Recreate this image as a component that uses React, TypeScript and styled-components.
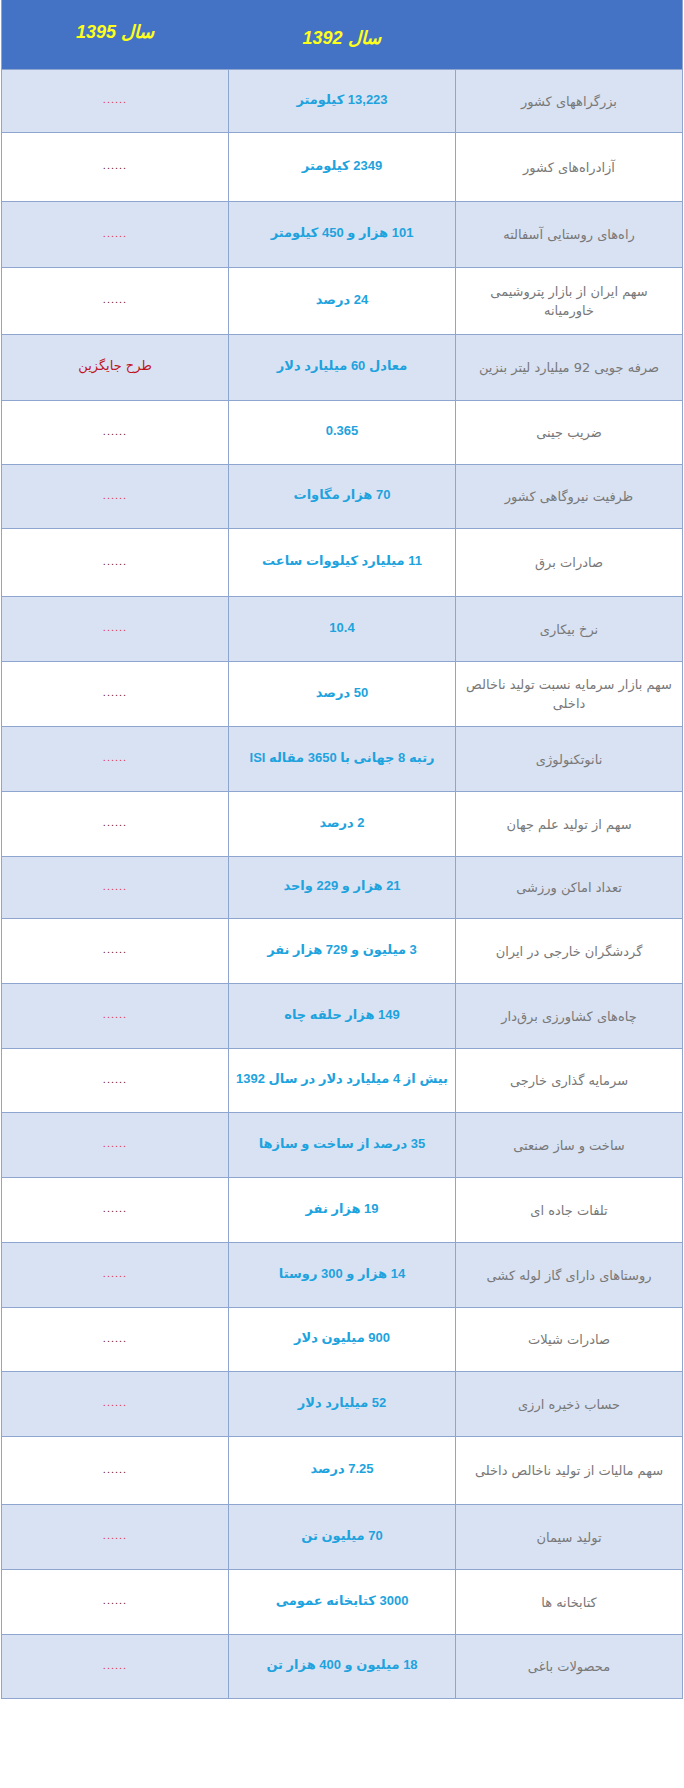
import styled, { createGlobalStyle } from "styled-components";

const GlobalStyle = createGlobalStyle`
  html, body {
    margin: 0;
    padding: 0;
    background: #ffffff;
  }
  body {
    font-family: "DejaVu Sans", sans-serif;
  }
`;

type Row = {
  label: string;
  value: string;
  h: number;
  note?: string;
};

// heights measured border to border from the source table
const rows: Row[] = [
  { label: "بزرگراههای کشور", value: "13,223 کیلومتر", h: 63 },
  { label: "آزادراه‌های کشور", value: "2349 کیلومتر", h: 69 },
  { label: "راه‌های روستایی آسفالته", value: "101 هزار و 450 کیلومتر", h: 66 },
  { label: "سهم ایران از بازار پتروشیمی\nخاورمیانه", value: "24 درصد", h: 67 },
  {
    label: "صرفه جویی 92 میلیارد لیتر بنزین",
    value: "معادل 60 میلیارد دلار",
    h: 66,
    note: "طرح جایگزین",
  },
  { label: "ضریب جینی", value: "0.365", h: 64 },
  { label: "ظرفیت نیروگاهی کشور", value: "70 هزار مگاوات", h: 64 },
  { label: "صادرات برق", value: "11 میلیارد کیلووات ساعت", h: 68 },
  { label: "نرخ بیکاری", value: "10.4", h: 65 },
  { label: "سهم بازار سرمایه نسبت تولید ناخالص\nداخلی", value: "50 درصد", h: 65 },
  { label: "نانوتکنولوژی", value: "رتبه 8 جهانی با 3650 مقاله ISI", h: 65 },
  { label: "سهم از تولید علم جهان", value: "2 درصد", h: 65 },
  { label: "تعداد اماکن ورزشی", value: "21 هزار و 229 واحد", h: 62 },
  { label: "گردشگران خارجی در ایران", value: "3 میلیون و 729 هزار نفر", h: 65 },
  { label: "چاه‌های کشاورزی برق‌دار", value: "149 هزار حلقه چاه", h: 65 },
  { label: "سرمایه گذاری خارجی", value: "بیش از 4 میلیارد دلار در سال 1392", h: 64 },
  { label: "ساخت و ساز صنعتی", value: "35 درصد از ساخت و سازها", h: 65 },
  { label: "تلفات جاده ای", value: "19 هزار نفر", h: 65 },
  { label: "روستاهای دارای گاز لوله کشی", value: "14 هزار و 300 روستا", h: 65 },
  { label: "صادرات شیلات", value: "900 میلیون دلار", h: 64 },
  { label: "حساب ذخیره ارزی", value: "52 میلیارد دلار", h: 65 },
  { label: "سهم مالیات از تولید ناخالص داخلی", value: "7.25 درصد", h: 68 },
  { label: "تولید سیمان", value: "70 میلیون تن", h: 65 },
  { label: "کتابخانه ها", value: "3000 کتابخانه عمومی", h: 65 },
  { label: "محصولات باغی", value: "18 میلیون و 400 هزار تن", h: 64 },
];

const Page = styled.div`
  width: 684px;
  height: 1788px;
  background: #ffffff;
`;

const Table = styled.div`
  direction: rtl;
  width: 682px;
  margin-left: 1px;
  border-left: 1px solid #8ea5cf;
  border-right: 1px solid #8ea5cf;
  box-sizing: border-box;
`;

const HeaderRow = styled.div`
  display: grid;
  grid-template-columns: 227px 227px 1fr;
  height: 70px;
  background: #4472c4;
  border-bottom: 1px solid #8ea5cf;
  box-sizing: border-box;
`;

const HeaderCell = styled.div<{ $shift?: number }>`
  display: flex;
  align-items: center;
  justify-content: center;
  position: relative;
  top: ${(p) => p.$shift ?? 0}px;
  color: #ffff1a;
  font-family: "Liberation Sans", "DejaVu Sans", sans-serif;
  font-size: 18px;
  font-weight: bold;
  font-style: italic;
`;

const BodyRow = styled.div<{ $shade: boolean; $h: number }>`
  display: grid;
  grid-template-columns: 227px 227px 1fr;
  height: ${(p) => p.$h}px;
  background: ${(p) => (p.$shade ? "#d9e2f3" : "#ffffff")};
  border-bottom: 1px solid #8ea5cf;
  box-sizing: border-box;
`;

const Cell = styled.div`
  display: flex;
  align-items: center;
  justify-content: center;
  text-align: center;
  padding: 0 6px;
  border-left: 1px solid #8ea5cf;
  &:last-child {
    border-left: none;
  }
`;

const Label = styled.span`
  color: #787878;
  font-family: "DejaVu Sans", sans-serif;
  font-size: 13px;
  line-height: 19px;
  white-space: pre-line;
`;

const Value = styled.span`
  color: #1ea3de;
  font-family: "Liberation Sans", "DejaVu Sans", sans-serif;
  font-size: 13px;
  font-weight: bold;
  margin-bottom: 4px;
`;

const Dots = styled.span<{ $shade: boolean }>`
  color: ${(p) => (p.$shade ? "#e5333f" : "#6a2224")};
  font-family: "Liberation Sans", sans-serif;
  font-size: 11px;
  letter-spacing: 1px;
  margin-bottom: 4px;
`;

const Note = styled.span`
  color: #c0141c;
  font-family: "DejaVu Sans", sans-serif;
  font-size: 13px;
  margin-bottom: 4px;
`;

export default function App() {
  return (
    <Page>
      <GlobalStyle />
      <Table>
        <HeaderRow>
          <HeaderCell />
          <HeaderCell $shift={3}>سال 1392</HeaderCell>
          <HeaderCell $shift={-3}>سال 1395</HeaderCell>
        </HeaderRow>
        {rows.map((r, i) => {
          const shade = i % 2 === 0;
          return (
            <BodyRow key={r.label} $shade={shade} $h={r.h}>
              <Cell>
                <Label>{r.label}</Label>
              </Cell>
              <Cell>
                <Value>{r.value}</Value>
              </Cell>
              <Cell>
                {r.note ? <Note>{r.note}</Note> : <Dots $shade={shade}>......</Dots>}
              </Cell>
            </BodyRow>
          );
        })}
      </Table>
    </Page>
  );
}
